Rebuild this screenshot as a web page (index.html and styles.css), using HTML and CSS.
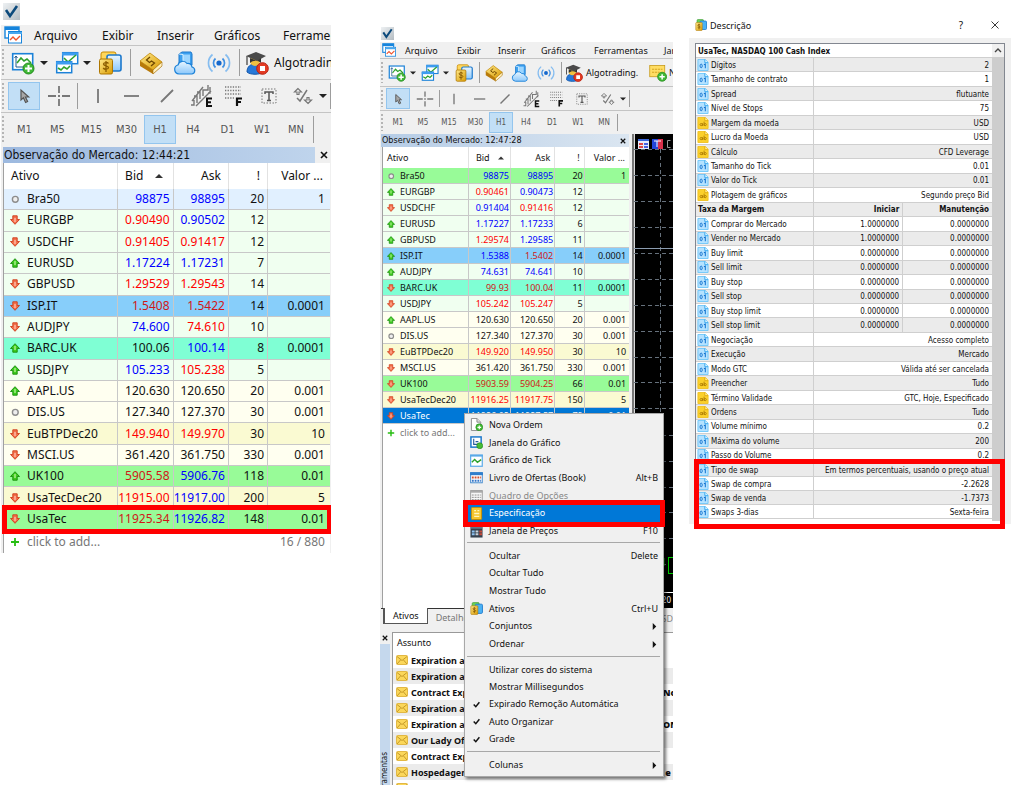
FILE: index.html
```
<!DOCTYPE html>
<html lang="pt">
<head>
<meta charset="utf-8">
<title>Observação do Mercado</title>
<link rel="stylesheet" href="styles.css">
</head>
<body>
<svg class="defs" aria-hidden="true">
  <defs>
    <linearGradient id="gold" x2="1" y2="1"><stop stop-color="#ffe98a"/><stop offset="1" stop-color="#d99a00"/></linearGradient>
    <linearGradient id="sky" x2="0" y2="1"><stop stop-color="#e9f6ff"/><stop offset="1" stop-color="#8cc8fb"/></linearGradient>
    <linearGradient id="silver" x2="1" y2="1"><stop stop-color="#eef1f3"/><stop offset="1" stop-color="#b4bcc2"/></linearGradient>
  </defs>
  <symbol id="app" viewBox="0 0 17 17"><rect width="17" height="17" fill="url(#silver)"/><path d="M3 7l4 6 7-10" fill="none" stroke="#0c4a7c" stroke-width="2.600"/></symbol>
  <symbol id="mdi" viewBox="0 0 18 18"><rect x="1" y="1" width="14" height="11" fill="#fff" stroke="#1684dc" stroke-width="1.4"/><path d="M1 2.5h14" stroke="#1684dc" stroke-width="3"/><rect x="4.500" y="5.500" width="13" height="11.500" fill="#fff" stroke="#1684dc"/><path d="M4 7h14" stroke="#49a8ef" stroke-width="2"/><path d="M6 14l3-3 3 3 4-4" fill="none" stroke="#f0542c" stroke-width="1.4"/></symbol>
  <symbol id="newchart" viewBox="0 0 24 24"><rect x="1.700" y="2.700" width="20" height="16" fill="#fff" stroke="#1c82d8" stroke-width="1.6"/><path d="M5 5v11h14M3.500 7L5 5l1.500 2M17 14.500l2 1.500-2 1.500" fill="none" stroke="#235a8c" stroke-width="1"/><path d="M6 12l4-5 3 3 3-2 4 4" fill="none" stroke="#2da12d" stroke-width="1.600"/><circle cx="17.500" cy="17.500" r="5.500" fill="#41b837" stroke="#218a1b"/><path d="M17.500 14v7M14 17.500h7" stroke="#fff" stroke-width="2"/></symbol>
  <symbol id="windows" viewBox="0 0 24 24"><rect x="7.700" y="1.700" width="15" height="11" fill="#fff" stroke="#1c82d8" stroke-width="1.500"/><path d="M7 3h16" stroke="#3d9df0" stroke-width="3"/><path d="M9 7l4 4 8-7" fill="none" stroke="#2da12d" stroke-width="1.600"/><rect x="1.700" y="10.700" width="15" height="11" fill="#fff" stroke="#1c82d8" stroke-width="1.500"/><path d="M1 12h16" stroke="#3d9df0" stroke-width="3"/><path d="M3 17l3 2 3-3 3 2 3-3" fill="none" stroke="#2da12d" stroke-width="1.600"/></symbol>
  <symbol id="symbols" viewBox="0 0 24 24"><rect x="3" y="1" width="15" height="15" rx="2" fill="#ffd75c" stroke="#c88a00"/><rect x="9" y="4" width="14" height="16" rx="2" fill="url(#sky)" stroke="#1c78cc" stroke-width="1.600"/><rect x="1.500" y="8" width="13" height="15" rx="1.500" fill="url(#gold)" stroke="#ae7600"/><path d="M10.500 12.500c-1-1.500-5-1.300-5 .6 0 2.400 5 1 5 3.500 0 2-4 2.200-5.300.4M8 10v11" fill="none" stroke="#8a5c00" stroke-width="1.300"/></symbol>
  <symbol id="catalog" viewBox="0 0 24 24"><rect x="4" y="1" width="13" height="14" rx="2" fill="#69cf55" stroke="#2b8f24"/><rect x="10" y="4" width="13" height="17" rx="2" fill="#4ab2f5" stroke="#1c78cc" stroke-width="1.600"/><rect x="1.500" y="7" width="13" height="16" rx="1.500" fill="url(#gold)" stroke="#ae7600"/><path d="M10.500 12c-1-1.500-5-1.300-5 .6 0 2.400 5 1 5 3.500 0 2-4 2.200-5.300.4M8 9.500v11" fill="none" stroke="#7a5000" stroke-width="1.300"/></symbol>
  <symbol id="book" viewBox="0 0 24 24"><path d="M1 10L11 2l12 9v4l-9 8L1 15z" fill="#b87a0a"/><path d="M1 10L11 2l12 9-9 8z" fill="url(#gold)" stroke="#b98208" stroke-width=".6"/><path d="M14 19l9-8v4l-9 8z" fill="#fff1c0" stroke="#a46d08" stroke-width=".6"/><path d="M11 6L7.500 9l3 2.500 2-1.500 3 2-3.500 3" fill="none" stroke="#6d4700" stroke-width="1.300"/></symbol>
  <symbol id="cloud" viewBox="0 0 24 24"><path d="M6 3l3-2h9l1 2v11H6z" fill="#3ca0f0" stroke="#1c78cc"/><path d="M10 3.500h7V13h-7z" fill="#9bd5ff"/><path d="M6 3l4 .5V13" fill="none" stroke="#d8f0ff"/><path d="M6 23a4.600 4.600 0 0 1-1-9 5 5 0 0 1 9-1.500 4.500 4.500 0 0 1 5 3.500 3.600 3.600 0 0 1 0 7z" fill="url(#sky)" stroke="#1c82d8" stroke-width="1.200"/></symbol>
  <symbol id="signal" viewBox="0 0 24 24" fill="none"><circle cx="12" cy="12" r="2.600" fill="#1668cc"/><path d="M8.500 7.500a6 6 0 0 0 0 9M15.500 7.500a6 6 0 0 1 0 9" stroke="#3f8fe2" stroke-width="1.700"/><path d="M5.500 3.500a11 11 0 0 0 0 17M18.500 3.500a11 11 0 0 1 0 17" stroke="#86bdf0" stroke-width="1.700"/></symbol>
  <symbol id="algo" viewBox="0 0 24 24"><path d="M2 21c0-6 4-8 8-8s8 3 8 8c-3 3-13 3-16 0z" fill="#2678d8" stroke="#1456a8"/><circle cx="10" cy="10" r="5" fill="#f0c040"/><path d="M1 5l10-4 10 4-9 5z" fill="#4a4a4a"/><path d="M5 7v5c3-3 8-3 11 0V7l-4 3z" fill="#333"/><path d="M2 5v9" stroke="#555" stroke-width="1.400"/><circle cx="17.500" cy="17.500" r="5.800" fill="#e33a22" stroke="#b81f10"/><rect x="15" y="15" width="5" height="5" fill="#fff"/></symbol>
  <symbol id="note" viewBox="0 0 24 24"><rect x="1" y="2" width="20" height="15" fill="#ffdd63" stroke="#c39512"/><path d="M4 7h14M4 11h10" stroke="#d5a625" stroke-width="1.500" stroke-dasharray="3 1"/><circle cx="17.500" cy="17" r="6" fill="#41b837" stroke="#218a1b"/><path d="M17.500 13.500v7M14 17h7" stroke="#fff" stroke-width="2"/></symbol>
  <symbol id="pointer" viewBox="0 0 24 24"><path d="M9 6v10l2.400-2.200 2.200 4.700 2-1-2.200-4.500h3.300z" fill="#a8a8a8" stroke="#555" stroke-width="1.200"/></symbol>
  <symbol id="cross" viewBox="0 0 24 24"><path d="M12 2v7M12 15v7M1 12h8M15 12h8M11 12h2" stroke="#777" stroke-width="1.800"/></symbol>
  <symbol id="vline" viewBox="0 0 24 24"><path d="M12 5v14" stroke="#777" stroke-width="1.800"/></symbol>
  <symbol id="hline" viewBox="0 0 24 24"><path d="M4 12h15" stroke="#777" stroke-width="1.800"/></symbol>
  <symbol id="slash" viewBox="0 0 24 24"><path d="M6 18L18 6" stroke="#777" stroke-width="1.800"/></symbol>
  <symbol id="channel" viewBox="0 0 24 24" fill="none" stroke="#777" stroke-width="1.400"><path d="M3 17L14 3M7 22L22 7M2 21h3v-5M8 19v-7H5M11 15V8H8M14 12V6h5V1M19 9h2V3"/><path d="M23 14.500h-5V22h5M18 18.200h4" stroke="#111" stroke-width="2"/></symbol>
  <symbol id="fibo" viewBox="0 0 24 24" fill="none" stroke="#777" stroke-width="1.300"><path d="M3 3h16M3 6.500h16M3 10h16M3 14h9" stroke-dasharray="1.300 1.300"/><path d="M20 14.500h-5v7.500M15 18h4" stroke="#111" stroke-width="2.200"/></symbol>
  <symbol id="textbox" viewBox="0 0 24 24" fill="none" stroke="#777"><rect x="5" y="5" width="14" height="14" stroke-dasharray="1.500 1.500"/><path d="M8 10V8h8v2M12 8v8.500M10 16.500h4" stroke="#555" stroke-width="1.500"/></symbol>
  <symbol id="shapes" viewBox="0 0 24 24" fill="none" stroke="#777" stroke-width="1.200"><path d="M8 4.500L4.500 8H7v2.500h2V8h2.500zM18 19.500l3.500-3.500H19v-2.500h-2V16h-2.500z"/><path d="M7 14l3 3 7-11" stroke-width="1.500"/></symbol>
  <symbol id="caret" viewBox="0 0 8 8"><path d="M0 2h8L4 6z" fill="#222"/></symbol>
  <symbol id="sort" viewBox="0 0 8 8"><path d="M0 6h8L4 2z" fill="#333"/></symbol>
  <symbol id="close" viewBox="0 0 8 8"><path d="M1 1l6 6M7 1L1 7" stroke="#111" stroke-width="1.600"/></symbol>
  <symbol id="up" viewBox="0 0 10 10"><path d="M5 .7L9.500 5.500H7.200v3.700H2.800V5.500H.5z" fill="#3ecb1e" stroke="#168c0c" stroke-width=".9"/><path d="M5 3v4" stroke="#baf29c" stroke-width="1.300"/></symbol>
  <symbol id="down" viewBox="0 0 10 10"><path d="M5 9.300L9.500 4.500H7.200V.8H2.800v3.700H.5z" fill="#f3704c" stroke="#cf3b1a" stroke-width=".9"/><path d="M5 3v4" stroke="#ffc4b0" stroke-width="1.300"/></symbol>
  <symbol id="flat" viewBox="0 0 10 10"><circle cx="5.300" cy="5.300" r="2.900" fill="#eee" stroke="#8c8c8c" stroke-width="1.400"/></symbol>
  <symbol id="plus" viewBox="0 0 10 10"><path d="M5 1v8M1 5h8" stroke="#27bd12" stroke-width="1.800"/></symbol>
  <symbol id="num" viewBox="0 0 12 13"><path d="M.5.500h8l3 3v9H.5z" fill="#b5e2ff" stroke="#6cc6fa"/><path d="M8 .5v3.500h3.500" fill="#e6f6ff" stroke="#2ba4ee"/><ellipse cx="4" cy="7.500" rx="1.200" ry="2" fill="none" stroke="#1273d0"/><path d="M7 6.300l1.500-.8V10" fill="none" stroke="#1273d0" stroke-width="1.100"/></symbol>
  <symbol id="str" viewBox="0 0 12 13"><path d="M.5.500h8l3 3v9H.5z" fill="#fbd02c" stroke="#f0c020"/><path d="M8 .5v3.500h3.500" fill="#fff0a8" stroke="#e0a800"/><circle cx="4" cy="8.200" r="1.200" fill="none" stroke="#a97800" stroke-width=".9"/><path d="M5.500 6.700v3M7.200 5v4.700" stroke="#a97800" stroke-width=".9"/><circle cx="8.400" cy="8.200" r="1.200" fill="none" stroke="#a97800" stroke-width=".9"/></symbol>
  <symbol id="mail" viewBox="0 0 12 10"><rect x=".5" y=".5" width="11" height="9" rx="1" fill="#fbd75a" stroke="#e2b844"/><path d="M1 1.500l5 4 5-4M1 9l3.500-4M11 9L7.500 5" fill="none" stroke="#b88a1c" stroke-width=".8"/></symbol>
  <symbol id="m-order" viewBox="0 0 14 14"><path d="M1.500.500h6l4 4v9h-10z" fill="#fff" stroke="#888"/><path d="M7.500.500v4h4" fill="#ddd" stroke="#888"/><circle cx="10" cy="10" r="3.700" fill="#46bb36" stroke="#1f8a18" stroke-width=".7"/><path d="M10 8v4M8 10h4" stroke="#fff" stroke-width="1.300"/></symbol>
  <symbol id="m-chart" viewBox="0 0 14 14"><rect x="1" y="1" width="11" height="11" fill="#fff" stroke="#1c78cc" stroke-width="1.600"/><path d="M4 3v6h6M6 6h3" fill="none" stroke="#245b9c" stroke-width="1.200"/><circle cx="10.500" cy="10.500" r="3.200" fill="#46bb36" stroke="#1f8a18" stroke-width=".7"/></symbol>
  <symbol id="m-tick" viewBox="0 0 14 14"><rect x=".7" y="1.200" width="12.500" height="12" fill="#fff" stroke="#5aaae8" stroke-width="1.300"/><path d="M0 1.800h14" stroke="#5aaae8" stroke-width="2"/><path d="M2 9l3-3 3 3 4-3" fill="none" stroke="#2da12d" stroke-width="1.500"/></symbol>
  <symbol id="m-book" viewBox="0 0 14 14"><rect x=".7" y="1.700" width="12.500" height="11" fill="#fff" stroke="#3c86cc"/><path d="M0 3h14" stroke="#2f7ecc" stroke-width="3"/><path d="M2 7h10" stroke="#d0502c" stroke-width="2" stroke-dasharray="2 1"/><path d="M2 10.500h10" stroke="#3475c8" stroke-width="2" stroke-dasharray="2 1"/></symbol>
  <symbol id="m-options" viewBox="0 0 14 14"><rect x=".7" y="1.700" width="12.500" height="11" fill="#f7f7f7" stroke="#999"/><path d="M0 3h14" stroke="#aaa" stroke-width="2"/><path d="M2 6.500h10M2 9h10M2 11.500h10" stroke="#888" stroke-dasharray="2 1"/></symbol>
  <symbol id="m-spec" viewBox="0 0 14 14"><rect x="1.500" y=".5" width="11" height="13" rx="1" fill="#f6c52c" stroke="#c98e00"/><path d="M4.500 4h2M8 4h2M4.500 7H10M4.500 10H10" fill="none" stroke="#fff6c0" stroke-width="1.400"/></symbol>
  <symbol id="m-depth" viewBox="0 0 14 14"><rect x=".5" y=".5" width="13" height="13" fill="#35414e"/><path d="M1 3h12" stroke="#65778a" stroke-width="2"/><path d="M2 7h3M2 10h3" stroke="#8ec2f0" stroke-width="2"/><path d="M6 7h3M6 10h3" stroke="#c8d2da" stroke-width="2"/><path d="M10 7h3M10 10h3" stroke="#c64a3a" stroke-width="2"/></symbol>
  <symbol id="check" viewBox="0 0 8 8"><path d="M.8 4l2.400 2.500L7.300 1.500" fill="none" stroke="#111" stroke-width="1.700"/></symbol>
  <symbol id="more" viewBox="0 0 8 8"><path d="M2 0l4 4-4 4z" fill="#111"/></symbol>
</svg>

<main class="page">
  <section class="terminal large">
    <svg class="app"><use href="#app"/></svg>
    <div class="shell">
      <nav class="menubar">
        <svg class="mdi"><use href="#mdi"/></svg>
        <button>Arquivo</button><button>Exibir</button><button>Inserir</button><button>Gráficos</button><button>Ferramentas</button>
      </nav>
      <div class="bar main-tools">
        <i class="grip"></i>
        <button aria-label="Novo gráfico"><svg class="ico"><use href="#newchart"/></svg></button>
        <button aria-label="Mais gráficos"><svg class="caret"><use href="#caret"/></svg></button>
        <button aria-label="Perfis"><svg class="ico"><use href="#windows"/></svg></button>
        <button aria-label="Mais perfis"><svg class="caret"><use href="#caret"/></svg></button>
        <button aria-label="Ativos"><svg class="ico"><use href="#symbols"/></svg></button>
        <i class="rule"></i>
        <button aria-label="Livro"><svg class="ico"><use href="#book"/></svg></button>
        <button aria-label="Nuvem"><svg class="ico"><use href="#cloud"/></svg></button>
        <button aria-label="Sinais"><svg class="ico"><use href="#signal"/></svg></button>
        <i class="rule"></i>
        <button aria-label="Robôs"><svg class="ico"><use href="#algo"/></svg></button>
        <button class="wide">Algotrading</button>
      </div>
      <div class="bar draw-tools">
        <i class="grip"></i>
        <button class="on" aria-label="Cursor"><svg class="ico"><use href="#pointer"/></svg></button>
        <button aria-label="Mira"><svg class="ico"><use href="#cross"/></svg></button>
        <i class="rule"></i>
        <button aria-label="Linha vertical"><svg class="ico"><use href="#vline"/></svg></button>
        <button aria-label="Linha horizontal"><svg class="ico"><use href="#hline"/></svg></button>
        <button aria-label="Linha de tendência"><svg class="ico"><use href="#slash"/></svg></button>
        <button aria-label="Canal"><svg class="ico"><use href="#channel"/></svg></button>
        <button aria-label="Fibonacci"><svg class="ico"><use href="#fibo"/></svg></button>
        <button aria-label="Texto"><svg class="ico"><use href="#textbox"/></svg></button>
        <button aria-label="Formas"><svg class="ico"><use href="#shapes"/></svg></button>
        <button aria-label="Mais formas"><svg class="caret"><use href="#caret"/></svg></button>
        <i class="rule"></i>
      </div>
      <div class="bar periods">
        <i class="grip"></i>
        <button>M1</button><button>M5</button><button>M15</button><button>M30</button><button class="on">H1</button><button>H4</button><button>D1</button><button>W1</button><button>MN</button>
        <i class="rule"></i>
      </div>
      <div class="caption"><span>Observação do Mercado: 12:44:21</span><button aria-label="Fechar"><svg><use href="#close"/></svg></button></div>
      <table class="watch">
        <colgroup><col class="c1"><col class="c2"><col class="c3"><col class="c4"><col class="c5"></colgroup>
        <thead><tr><th>Ativo</th><th>Bid <svg><use href="#sort"/></svg></th><th>Ask</th><th>!</th><th>Valor ...</th></tr></thead>
        <tbody>
          <tr class="ice"><td><svg><use href="#flat"/></svg>Bra50</td><td class="b">98875</td><td class="b">98895</td><td>20</td><td>1</td></tr>
          <tr class="mint"><td><svg><use href="#down"/></svg>EURGBP</td><td class="r">0.90490</td><td class="b">0.90502</td><td>12</td><td></td></tr>
          <tr class="mint"><td><svg><use href="#down"/></svg>USDCHF</td><td class="r">0.91405</td><td class="r">0.91417</td><td>12</td><td></td></tr>
          <tr class="mint"><td><svg><use href="#up"/></svg>EURUSD</td><td class="b">1.17224</td><td class="b">1.17231</td><td>7</td><td></td></tr>
          <tr class="mint"><td><svg><use href="#down"/></svg>GBPUSD</td><td class="r">1.29529</td><td class="r">1.29543</td><td>14</td><td></td></tr>
          <tr class="blue"><td><svg><use href="#down"/></svg>ISP.IT</td><td class="r">1.5408</td><td class="r">1.5422</td><td>14</td><td>0.0001</td></tr>
          <tr class="mint"><td><svg><use href="#down"/></svg>AUDJPY</td><td class="b">74.600</td><td class="r">74.610</td><td>10</td><td></td></tr>
          <tr class="aqua"><td><svg><use href="#up"/></svg>BARC.UK</td><td>100.06</td><td class="b">100.14</td><td>8</td><td>0.0001</td></tr>
          <tr class="mint"><td><svg><use href="#up"/></svg>USDJPY</td><td class="b">105.233</td><td class="r">105.238</td><td>5</td><td></td></tr>
          <tr class="ivory"><td><svg><use href="#up"/></svg>AAPL.US</td><td>120.630</td><td>120.650</td><td>20</td><td>0.001</td></tr>
          <tr class="ivory"><td><svg><use href="#flat"/></svg>DIS.US</td><td>127.340</td><td>127.370</td><td>30</td><td>0.001</td></tr>
          <tr class="sand"><td><svg><use href="#down"/></svg>EuBTPDec20</td><td class="r">149.940</td><td class="r">149.970</td><td>30</td><td>10</td></tr>
          <tr class="ivory"><td><svg><use href="#down"/></svg>MSCI.US</td><td>361.420</td><td>361.750</td><td>330</td><td>0.001</td></tr>
          <tr class="green"><td><svg><use href="#up"/></svg>UK100</td><td class="r">5905.58</td><td class="b">5906.76</td><td>118</td><td>0.01</td></tr>
          <tr class="sand"><td><svg><use href="#down"/></svg>UsaTecDec20</td><td class="r">11915.00</td><td class="b">11917.00</td><td>200</td><td>5</td></tr>
          <tr class="green marked"><td><svg><use href="#down"/></svg>UsaTec</td><td class="r">11925.34</td><td class="b">11926.82</td><td>148</td><td>0.01</td></tr>
        </tbody>
        <tfoot><tr><td colspan="3"><svg><use href="#plus"/></svg>click to add...</td><td colspan="2">16 / 880</td></tr></tfoot>
      </table>
    </div>
  </section>

  <section class="terminal small">
    <svg class="app"><use href="#app"/></svg>
    <div class="shell">
      <nav class="menubar">
        <svg class="mdi"><use href="#mdi"/></svg>
        <button>Arquivo</button><button>Exibir</button><button>Inserir</button><button>Gráficos</button><button>Ferramentas</button><button>Janela</button>
      </nav>
      <div class="bar main-tools">
        <i class="grip"></i>
        <button aria-label="Novo gráfico"><svg class="ico"><use href="#newchart"/></svg></button>
        <button aria-label="Mais gráficos"><svg class="caret"><use href="#caret"/></svg></button>
        <button aria-label="Perfis"><svg class="ico"><use href="#windows"/></svg></button>
        <button aria-label="Mais perfis"><svg class="caret"><use href="#caret"/></svg></button>
        <button aria-label="Ativos"><svg class="ico"><use href="#symbols"/></svg></button>
        <i class="rule"></i>
        <button aria-label="Livro"><svg class="ico"><use href="#book"/></svg></button>
        <button aria-label="Nuvem"><svg class="ico"><use href="#cloud"/></svg></button>
        <button aria-label="Sinais"><svg class="ico"><use href="#signal"/></svg></button>
        <i class="rule"></i>
        <button aria-label="Robôs"><svg class="ico"><use href="#algo"/></svg></button>
        <button class="wide">Algotrading.</button>
        <button aria-label="Nova ordem"><svg class="ico"><use href="#note"/></svg></button>
        <button class="wide">Nova</button>
      </div>
      <div class="bar draw-tools">
        <i class="grip"></i>
        <button class="on" aria-label="Cursor"><svg class="ico"><use href="#pointer"/></svg></button>
        <button aria-label="Mira"><svg class="ico"><use href="#cross"/></svg></button>
        <i class="rule"></i>
        <button aria-label="Linha vertical"><svg class="ico"><use href="#vline"/></svg></button>
        <button aria-label="Linha horizontal"><svg class="ico"><use href="#hline"/></svg></button>
        <button aria-label="Linha de tendência"><svg class="ico"><use href="#slash"/></svg></button>
        <button aria-label="Canal"><svg class="ico"><use href="#channel"/></svg></button>
        <button aria-label="Fibonacci"><svg class="ico"><use href="#fibo"/></svg></button>
        <button aria-label="Texto"><svg class="ico"><use href="#textbox"/></svg></button>
        <button aria-label="Formas"><svg class="ico"><use href="#shapes"/></svg></button>
        <button aria-label="Mais formas"><svg class="caret"><use href="#caret"/></svg></button>
        <i class="rule"></i>
      </div>
      <div class="bar periods">
        <i class="grip"></i>
        <button>M1</button><button>M5</button><button>M15</button><button>M30</button><button class="on">H1</button><button>H4</button><button>D1</button><button>W1</button><button>MN</button>
        <i class="rule"></i>
      </div>
      <div class="work">
        <div class="market">
          <div class="caption"><span>Observação do Mercado: 12:47:28</span><button aria-label="Fechar"><svg><use href="#close"/></svg></button></div>
          <div class="sheet">
          <table class="watch">
            <colgroup><col class="c1"><col class="c2"><col class="c3"><col class="c4"><col class="c5"></colgroup>
            <thead><tr><th>Ativo</th><th>Bid <svg><use href="#sort"/></svg></th><th>Ask</th><th>!</th><th>Valor ...</th></tr></thead>
            <tbody>
              <tr class="green"><td><svg><use href="#flat"/></svg>Bra50</td><td class="b">98875</td><td class="b">98895</td><td>20</td><td>1</td></tr>
              <tr class="mint"><td><svg><use href="#up"/></svg>EURGBP</td><td class="r">0.90461</td><td class="b">0.90473</td><td>12</td><td></td></tr>
              <tr class="mint"><td><svg><use href="#down"/></svg>USDCHF</td><td class="b">0.91404</td><td class="r">0.91416</td><td>12</td><td></td></tr>
              <tr class="mint"><td><svg><use href="#up"/></svg>EURUSD</td><td class="b">1.17227</td><td class="b">1.17233</td><td>6</td><td></td></tr>
              <tr class="mint"><td><svg><use href="#up"/></svg>GBPUSD</td><td class="r">1.29574</td><td class="b">1.29585</td><td>11</td><td></td></tr>
              <tr class="blue"><td><svg><use href="#up"/></svg>ISP.IT</td><td class="b">1.5388</td><td class="r">1.5402</td><td>14</td><td>0.0001</td></tr>
              <tr class="mint"><td><svg><use href="#up"/></svg>AUDJPY</td><td class="b">74.631</td><td class="b">74.641</td><td>10</td><td></td></tr>
              <tr class="aqua"><td><svg><use href="#down"/></svg>BARC.UK</td><td class="r">99.93</td><td class="r">100.04</td><td>11</td><td>0.0001</td></tr>
              <tr class="mint"><td><svg><use href="#down"/></svg>USDJPY</td><td class="r">105.242</td><td class="r">105.247</td><td>5</td><td></td></tr>
              <tr class="ivory"><td><svg><use href="#up"/></svg>AAPL.US</td><td>120.630</td><td>120.650</td><td>20</td><td>0.001</td></tr>
              <tr class="ivory"><td><svg><use href="#flat"/></svg>DIS.US</td><td>127.340</td><td>127.370</td><td>30</td><td>0.001</td></tr>
              <tr class="sand"><td><svg><use href="#down"/></svg>EuBTPDec20</td><td class="r">149.920</td><td class="r">149.950</td><td>30</td><td>10</td></tr>
              <tr class="ivory"><td><svg><use href="#down"/></svg>MSCI.US</td><td>361.420</td><td>361.750</td><td>330</td><td>0.001</td></tr>
              <tr class="green"><td><svg><use href="#down"/></svg>UK100</td><td class="r">5903.59</td><td class="r">5904.25</td><td>66</td><td>0.01</td></tr>
              <tr class="sand"><td><svg><use href="#down"/></svg>UsaTecDec20</td><td class="r">11916.25</td><td class="r">11917.75</td><td>150</td><td>5</td></tr>
              <tr class="picked"><td><svg><use href="#down"/></svg>UsaTec</td><td>11926.02</td><td>11927.57</td><td>79</td><td>0.01</td></tr>
            </tbody>
            <tfoot><tr><td colspan="5"><svg><use href="#plus"/></svg>click to add...</td></tr></tfoot>
          </table>
          </div>
          <div class="tabs"><button class="tab on">Ativos</button><button class="tab">Detalhes</button></div>
        </div>
        <div class="chart">
          <svg class="plot" aria-hidden="true">
            <path d="M0.500 0v457" stroke="#dcdcdc"/>
            <path d="M26.500 8v449" stroke="#66717c" stroke-dasharray="4 3"/>
            <g stroke="#66717c" stroke-dasharray="4 3"><path d="M0 15.500h60M0 41.500h60M0 67.500h60M0 93.500h60M0 119.500h60M0 145.500h60M0 171.500h60M0 197.500h60M0 223.500h60M0 248.500h60M0 274.500h60M0 301.500h60M0 327.500h60M0 353.500h60M0 378.500h60M0 404.500h60M0 430.500h60"/></g>
            <path d="M0 114.500h60" stroke="#8b9cb0"/>
            <rect x="4" y="5" width="11" height="10" fill="#e8eaf8"/><path d="M4 6h11" stroke="#3b66d8" stroke-width="2"/><path d="M5 10h4M5 13h4" stroke="#dd4646" stroke-width="2"/><path d="M10 10h4M10 13h4" stroke="#4a62e0" stroke-width="2"/>
            <rect x="18" y="5" width="6" height="10" fill="#2346d8"/><rect x="24" y="5" width="5" height="10" fill="#d8304a"/><path d="M20 7h7M23 7v6" stroke="#fff"/>
            <path d="M36.500 6.500h-3v7h3" stroke="#999" fill="none"/>
            <path d="M30 424v8" stroke="#0c0" fill="none"/><rect x="34.500" y="423.500" width="10" height="16" fill="#000" stroke="#0c0"/>
          </svg>
          <span class="axis">20</span>
          <span class="chart-tab">USD</span>
        </div>
      </div>
      <div class="toolbox">
        <div class="side"><button aria-label="Fechar"><svg><use href="#close"/></svg></button><span>Ferramentas</span></div>
        <div class="inbox">
          <h2>Assunto</h2>
          <ul>
            <li><svg><use href="#mail"/></svg><span>Expiration and</span></li>
            <li><svg><use href="#mail"/></svg><span>Expiration and</span></li>
            <li><svg><use href="#mail"/></svg><span>Contract Expir</span><b>No</b></li>
            <li><svg><use href="#mail"/></svg><span>Expiration and</span></li>
            <li><svg><use href="#mail"/></svg><span>Expiration and</span><b>ON</b></li>
            <li><svg><use href="#mail"/></svg><span>Our Lady Of A</span></li>
            <li><svg><use href="#mail"/></svg><span>Contract Expir</span></li>
            <li><svg><use href="#mail"/></svg><span>Hospedagem</span><b>&nbsp;e</b></li>
            <li><svg><use href="#mail"/></svg><span>Bom dia a todos os clientes e horários dos feriados 21 set</span></li>
          </ul>
        </div>
      </div>
    </div>
    <div class="popup">
      <div class="group g7">
        <button><svg><use href="#m-order"/></svg><span>Nova Ordem</span></button>
        <button><svg><use href="#m-chart"/></svg><span>Janela do Gráfico</span></button>
        <button><svg><use href="#m-tick"/></svg><span>Gráfico de Tick</span></button>
        <button><svg><use href="#m-book"/></svg><span>Livro de Ofertas (Book)</span><kbd>Alt+B</kbd></button>
        <button class="off"><svg><use href="#m-options"/></svg><span>Quadro de Opções</span></button>
        <button class="hot marked"><svg><use href="#m-spec"/></svg><span>Especificação</span></button>
        <button><svg><use href="#m-depth"/></svg><span>Janela de Preços</span><kbd>F10</kbd></button>
      </div>
      <div class="group g6">
        <button><span>Ocultar</span><kbd>Delete</kbd></button>
        <button><span>Ocultar Tudo</span></button>
        <button><span>Mostrar Tudo</span></button>
        <button><svg><use href="#catalog"/></svg><span>Ativos</span><kbd>Ctrl+U</kbd></button>
        <button><span>Conjuntos</span><svg class="tiny"><use href="#more"/></svg></button>
        <button><span>Ordenar</span><svg class="tiny"><use href="#more"/></svg></button>
      </div>
      <div class="group g5">
        <button><span>Utilizar cores do sistema</span></button>
        <button><span>Mostrar Millisegundos</span></button>
        <button><svg class="tiny"><use href="#check"/></svg><span>Expirado Remoção Automática</span></button>
        <button><svg class="tiny"><use href="#check"/></svg><span>Auto Organizar</span></button>
        <button><svg class="tiny"><use href="#check"/></svg><span>Grade</span></button>
      </div>
      <div class="group g1">
        <button><span>Colunas</span><svg class="tiny"><use href="#more"/></svg></button>
      </div>
    </div>
  </section>

  <section class="dialog">
    <header>
      <svg class="dlg-ico"><use href="#catalog"/></svg><h1>Descrição</h1>
      <button class="help">?</button>
      <button aria-label="Fechar"><svg class="x" viewBox="0 0 8 8"><path d="M.5.500l7 7M7.500.500l-7 7" stroke="#222" stroke-width=".9"/></svg></button>
    </header>
    <div class="frame">
      <div class="list">
        <table class="spec">
          <colgroup><col class="s1"><col class="s2"><col class="s3"></colgroup>
          <thead><tr><th colspan="3">UsaTec, NASDAQ 100 Cash Index</th></tr></thead>
          <tbody>
            <tr class="alt"><td><svg><use href="#num"/></svg>Dígitos</td><td colspan="2">2</td></tr>
            <tr><td><svg><use href="#num"/></svg>Tamanho de contrato</td><td colspan="2">1</td></tr>
            <tr class="alt"><td><svg><use href="#num"/></svg>Spread</td><td colspan="2">flutuante</td></tr>
            <tr><td><svg><use href="#num"/></svg>Nível de Stops</td><td colspan="2">75</td></tr>
            <tr class="alt"><td><svg><use href="#str"/></svg>Margem da moeda</td><td colspan="2">USD</td></tr>
            <tr><td><svg><use href="#str"/></svg>Lucro da Moeda</td><td colspan="2">USD</td></tr>
            <tr class="alt"><td><svg><use href="#str"/></svg>Cálculo</td><td colspan="2">CFD Leverage</td></tr>
            <tr><td><svg><use href="#num"/></svg>Tamanho do Tick</td><td colspan="2">0.01</td></tr>
            <tr class="alt"><td><svg><use href="#num"/></svg>Valor do Tick</td><td colspan="2">0.01</td></tr>
            <tr><td><svg><use href="#str"/></svg>Plotagem de gráficos</td><td colspan="2">Segundo preço Bid</td></tr>
            <tr class="alt"><th>Taxa da Margem</th><th>Iniciar</th><th>Manutenção</th></tr>
            <tr><td><svg><use href="#num"/></svg>Comprar do Mercado</td><td>1.0000000</td><td>0.0000000</td></tr>
            <tr class="alt"><td><svg><use href="#num"/></svg>Vender no Mercado</td><td>1.0000000</td><td>0.0000000</td></tr>
            <tr><td><svg><use href="#num"/></svg>Buy limit</td><td>0.0000000</td><td>0.0000000</td></tr>
            <tr class="alt"><td><svg><use href="#num"/></svg>Sell limit</td><td>0.0000000</td><td>0.0000000</td></tr>
            <tr><td><svg><use href="#num"/></svg>Buy stop</td><td>0.0000000</td><td>0.0000000</td></tr>
            <tr class="alt"><td><svg><use href="#num"/></svg>Sell stop</td><td>0.0000000</td><td>0.0000000</td></tr>
            <tr><td><svg><use href="#num"/></svg>Buy stop limit</td><td>0.0000000</td><td>0.0000000</td></tr>
            <tr class="alt"><td><svg><use href="#num"/></svg>Sell stop limit</td><td>0.0000000</td><td>0.0000000</td></tr>
            <tr><td><svg><use href="#num"/></svg>Negociação</td><td colspan="2">Acesso completo</td></tr>
            <tr class="alt"><td><svg><use href="#num"/></svg>Execução</td><td colspan="2">Mercado</td></tr>
            <tr><td><svg><use href="#num"/></svg>Modo GTC</td><td colspan="2">Válida até ser cancelada</td></tr>
            <tr class="alt"><td><svg><use href="#str"/></svg>Preencher</td><td colspan="2">Tudo</td></tr>
            <tr><td><svg><use href="#str"/></svg>Término Validade</td><td colspan="2">GTC, Hoje, Especificado</td></tr>
            <tr class="alt"><td><svg><use href="#str"/></svg>Ordens</td><td colspan="2">Tudo</td></tr>
            <tr><td><svg><use href="#num"/></svg>Volume mínimo</td><td colspan="2">0.2</td></tr>
            <tr class="alt"><td><svg><use href="#num"/></svg>Máxima do volume</td><td colspan="2">200</td></tr>
            <tr><td><svg><use href="#num"/></svg>Passo do Volume</td><td colspan="2">0.2</td></tr>
          </tbody>
          <tbody class="marked">
            <tr class="alt"><td><svg><use href="#num"/></svg>Tipo de swap</td><td colspan="2">Em termos percentuais, usando o preço atual</td></tr>
            <tr><td><svg><use href="#num"/></svg>Swap de compra</td><td colspan="2">-2.2628</td></tr>
            <tr class="alt"><td><svg><use href="#num"/></svg>Swap de venda</td><td colspan="2">-1.7373</td></tr>
            <tr><td><svg><use href="#num"/></svg>Swaps 3-dias</td><td colspan="2">Sexta-feira</td></tr>
          </tbody>
        </table>
        <div class="scroll"><svg viewBox="0 0 8 8"><path d="M1 5.500l3-3 3 3" fill="none" stroke="#444" stroke-width="1.400"/></svg><i></i></div>
      </div>
    </div>
  </section>
</main>
</body>
</html>
```
FILE: styles.css
```
* { box-sizing: border-box; }
body { margin: 0; background: #fff; color: #111; font-family: "Noto Sans", "Open Sans", sans-serif; overflow: hidden; }
button { margin: 0; padding: 0; border: 0; background: none; color: inherit; font: inherit; white-space: nowrap; }
svg { display: block; flex: none; }
.defs { position: absolute; width: 0; height: 0; }

.page { display: grid; grid-template-columns: 330fr 326fr 322fr; column-gap: 16px; align-items: start; padding: 3px 2px 0 1px; }

/* terminal windows, in two densities */
.terminal { position: relative; min-width: 0; }
.large {
  --text: 12px; --icon: 24px; --caret: 8px; --mark: 10px; --caption: 12px; --period: 11px;
  --bar1: 34px; --bar2: 33px; --bar3: 34px; --menu: 20px; --title: 16px;
}
.small {
  --text: 9px; --icon: 18px; --caret: 6px; --mark: 8px; --caption: 9px; --period: 8px;
  --bar1: 28px; --bar2: 24px; --bar3: 24px; --menu: 16px; --title: 13px;
}
.small { margin-left: 33px; padding-top: 24px; }
.app { width: 17px; height: 17px; margin: 0 0 5px 2px; }
.small .app { width: 13px; height: 13px; margin: 0 0 2px 1px; }
.shell { background: #f0f0f0; overflow: hidden; font-size: var(--text); }

.menubar { display: grid; align-items: center; height: var(--menu); }
.large .menubar { grid-template-columns: 33px 68px 55px 57px 69px auto; }
.small .menubar { grid-template-columns: 25px 52px 41px 43px 53px 70px auto; }
.menubar button { text-align: left; }
.mdi { width: 18px; height: 18px; margin-left: 3px; }
.small .mdi { width: 14px; height: 14px; margin-left: 2px; }

.bar { display: grid; align-items: stretch; border-top: 1px solid #c4c4c4; }
.bar button { display: flex; align-items: center; justify-content: center; }
.bar .on { background: #c2dff6; border: 1px solid #93c5ee; margin: 2px 0; }
.small .bar .on { margin: 1px 0; }
.bar .wide { justify-content: flex-start; }
.main-tools { height: var(--bar1); }
.draw-tools { height: var(--bar2); }
.periods { height: var(--bar3); font-family: "DejaVu Sans Condensed", "DejaVu Sans", sans-serif; font-size: var(--period); color: #555; }
.large .main-tools { grid-template-columns: 7px 29px 13px 34px 6px 40px 1px 40px 28px 40px 1px 34px auto; }
.small .main-tools { grid-template-columns: 6px 22px 9px 26px 5px 31px 1px 28px 23px 30px 1px 24px 60px 23px auto; }
.large .draw-tools { grid-template-columns: 7px 32px 37px 1px 39px 30px 39px 30px 36px 33px 34px 8px 1px; }
.small .draw-tools { grid-template-columns: 6px 24px 29px 1px 28px 23px 28px 24px 27px 24px 26px 6px 1px; }
.draw-tools .rule:last-child { margin-left: 3px; width: 1px; }
.large .periods { grid-template-columns: 7px 33px 33px 35px 35px 32px 34px 35px 34px 34px 1px; }
.small .periods { grid-template-columns: 6px 24px 26px 26px 27px 24px 26px 26px 26px 26px 1px; }
.grip { width: 2px; margin: 3px 0 3px 1px; background: repeating-linear-gradient(#b5b5b5 0 2px, transparent 2px 4px); }
.rule { background: #9d9d9d; margin: 3px 0; }
.ico { width: var(--icon); height: var(--icon); }
.caret { width: var(--caret); height: var(--caret); }

.caption { display: flex; align-items: center; justify-content: space-between; height: var(--title); margin-left: 2px; padding: 0 3px 0 1px; font-family: "DejaVu Sans Condensed", "DejaVu Sans", sans-serif; font-size: var(--caption); line-height: 1; background: linear-gradient(90deg, #9db9df, #bfd4ec 95%, #f0f0f0 95%); }
.large .caption { margin-top: 1px; }
.small .caption { background: linear-gradient(90deg, #b5cce6, #dbe6f1); }
.caption svg { width: 8px; height: 8px; }
.small .caption svg { width: 6px; height: 6px; }

/* quotes */
.watch { width: calc(100% - 3px); margin-left: 2px; border-collapse: separate; border-spacing: 0; table-layout: fixed; border-left: 1px solid #a0a0a0; background: #fff; font-size: var(--text); line-height: 1; }
.large .watch { height: 390px; }
.c1 { width: 35%; } .c2 { width: 17%; } .c3 { width: 17%; } .c4 { width: 12%; } .c5 { width: 19%; }
.small .c3 { width: 18%; } .small .c5 { width: 18%; }
.watch th { height: 26px; padding: 0 7px; font-weight: 400; text-align: right; border-right: 1px solid #e2e2e2; white-space: nowrap; }
.watch th:first-child { text-align: left; }
.watch th svg { display: inline-block; width: var(--caret); height: var(--caret); margin: 0 4px 0 8px; }
.watch td { height: 21px; padding: 0 3px 0 0; text-align: right; border-right: 1px solid #c8c8c8; border-bottom: 1px solid #c8c8c8; white-space: nowrap; }
.watch td:first-child { padding-left: 6px; text-align: left; }
.watch td:last-child { padding-right: 5px; border-right: 0; }
.watch th:last-child { border-right: 0; }
.watch td svg { display: inline-block; width: var(--mark); height: var(--mark); margin-right: 7px; vertical-align: -1px; }
.watch tfoot td { height: 23px; border: 0; color: #777; }
.small .watch { width: 100%; margin-left: 0; border: 0; }
.small .watch th { height: 21px; padding: 0 4px; }
.small .watch th svg { margin: 0 2px 0 6px; }
.small .watch td { height: 16px; padding-right: 1px; }
.small .watch td:first-child { padding-left: 4px; }
.small .watch td:last-child { padding-right: 3px; }
.small .watch td svg { margin-right: 5px; }
.ice { background: #e1f0ff; } .mint { background: #f0fff0; } .blue { background: #87cefa; }
.aqua { background: #7fffd4; } .ivory { background: #fffff0; } .sand { background: #fafad2; } .green { background: #98fb98; }
.picked { background: #0078d7; color: #fff; }
.r { color: #f00; } .b { color: #00f; }
.blue .r, .green .r, .aqua .r { color: #d01818; }

.marked { position: relative; }
.marked::after { content: ""; position: absolute; border: 5px solid #f00; inset: -4px -2px; pointer-events: none; z-index: 3; }

/* workspace under the toolbars */
.work { display: flex; }
.market { flex: none; width: 85%; padding-left: 1px; }
.market .caption { margin: 0; }
.sheet { min-height: 461px; margin-left: 1px; background: #fff; border-left: 1px solid #a0a0a0; }
.tabs { display: flex; height: 24px; border-top: 1px solid #333; }
.tab { height: 16px; padding: 0 8px; color: #777; }
.tab.on { background: #fff; color: #111; border: 1px solid #555; border-top: 0; border-left-width: 2px; margin: -1px 0 0 2px; }
.chart { flex: 1; min-width: 0; margin-left: 3px; display: flex; flex-direction: column; border-left: 2px solid #777; overflow: hidden; }
.plot { width: 100%; height: 459px; background: #000; border-bottom: 1px solid #fff; }
.axis { height: 15px; padding-right: 2px; background: #000; color: #fff; font-size: 8px; line-height: 14px; text-align: right; }
.chart-tab { color: #888; line-height: 22px; text-align: right; }

.toolbox { display: flex; height: 153px; overflow: hidden; }
.side { flex: none; display: flex; flex-direction: column; align-items: center; justify-content: space-between; width: 10px; background: linear-gradient(#f0f0f0 12px, #c5d8ed 12px); }
.side svg { width: 6px; height: 6px; margin-top: 3px; }
.side span { margin-bottom: -12px; writing-mode: vertical-rl; transform: rotate(180deg); font-family: "DejaVu Sans Condensed", "DejaVu Sans", sans-serif; font-size: 8px; line-height: 10px; }
.inbox { flex: 1; min-width: 0; margin-left: 2px; background: #fff; border-left: 1px solid #999; border-top: 1px solid #999; }
.inbox h2 { margin: 0; padding-left: 4px; font-size: 9px; font-weight: 400; line-height: 19px; }
.inbox ul { margin: 0; padding: 0; list-style: none; }
.inbox li { display: flex; align-items: center; height: 16px; padding-left: 3px; font-weight: 700; white-space: nowrap; }
.inbox li:nth-child(even) { background: #ebebeb; }
.inbox li svg { width: 12px; height: 10px; margin-right: 3px; }
.inbox li b { margin-left: auto; width: 10px; }

.popup { position: absolute; top: 410px; left: 84px; width: 200px; padding: 2px 3px 2px 2px; background: #f0f0f0; border: 1px solid #a8a8a8; box-shadow: 2px 2px 3px #0008; font-size: 9px; line-height: 12px; }
.group { display: grid; grid-auto-rows: 1fr; }
.group + .group { margin-top: 3px; padding-top: 4px; border-top: 1px solid #a8a8a8; }
.group.g6 { margin-top: 2px; }
.g7 { height: 124px; } .g6 { height: 111px; } .g5 { height: 92px; } .g1 { height: 23px; }
.popup button { display: grid; grid-template-columns: 20px 1fr auto; align-items: center; text-align: left; padding: 0 2px; }
.popup button > svg { width: 13px; height: 13px; margin-left: 1px; grid-column: 1; grid-row: 1; }
.popup button > span { grid-column: 2; grid-row: 1; }
.popup kbd { font: inherit; grid-column: 3; }
.popup button > .tiny { width: 7px; height: 7px; margin-left: 4px; }
.popup span + .tiny { grid-column: 3; }
.popup .off { color: #888; }
.popup .hot { background: #0078d7; color: #fff; }
.popup .marked::after { inset: -5px -5px -5px -4px; }

/* contract specification */
.dialog { padding-top: 9px; min-width: 0; }
.dialog header { display: flex; align-items: center; height: 26px; padding: 0 12px 0 6px; }
.dlg-ico { width: 12px; height: 12px; }
.dialog h1 { flex: 1; margin: 0 0 0 3px; font-size: 9px; font-weight: 400; }
.help { margin-right: 28px; font-size: 10px; }
.x { width: 8px; height: 8px; }
.frame { padding: 5px 6px 0; background: #f0f0f0; }
.list { display: flex; padding-bottom: 3px; background: #fff; border: 1px solid #828790; border-bottom: 0; }
.spec { flex: 1; height: 477px; border-collapse: separate; border-spacing: 0; table-layout: fixed; font-family: "DejaVu Sans Condensed", "DejaVu Sans", sans-serif; font-size: 8px; line-height: 10px; }
.s1 { width: 40%; } .s2 { width: 30%; } .s3 { width: 30%; }
.spec th, .spec td { height: 14px; padding: 2px 3px 0 0; border-bottom: 1px solid #cfcfcf; border-right: 1px solid #cfcfcf; text-align: right; white-space: nowrap; }
.spec th:first-child { padding-left: 2px; text-align: left; }
.spec td:first-child { padding: 0 0 0 1px; text-align: left; }
.spec td:last-child, .spec th:last-child { border-right: 0; }
.spec td svg { display: inline-block; width: 12px; height: 12px; margin-right: 2px; vertical-align: -3px; }
.spec .alt { background: #ebebeb; }
.spec .marked::after { inset: -4px -13px -8px -2px; }
.scroll { flex: none; display: flex; flex-direction: column; width: 12px; background: #f0f0f0; }
.scroll svg { width: 8px; height: 13px; margin: 0 auto; }
.scroll i { flex: 1; background: #cdcdcd; }
```
